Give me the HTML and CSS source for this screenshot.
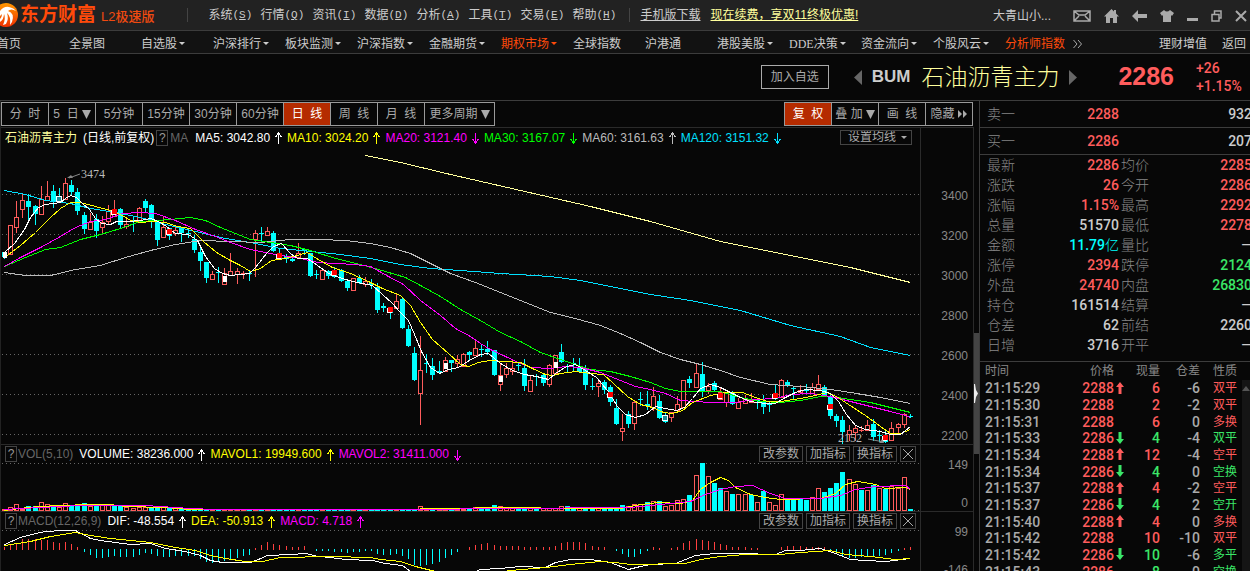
FILE: index.html
```html
<!DOCTYPE html>
<html lang="zh-CN">
<head>
<meta charset="utf-8">
<title>东方财富 L2极速版</title>
<link rel="stylesheet" href="styles.css">
</head>
<body>
<svg class="defs" aria-hidden="true">
  <symbol id="up" viewBox="0 0 7 13"><path d="M3 1H4V13H3ZM2 2H5V4H2ZM1 4H2V6H1ZM5 4H6V6H5ZM0 5H1V6H0ZM6 5H7V6H6Z" fill="currentColor"/></symbol>
  <symbol id="down" viewBox="0 0 7 13"><path d="M3 2H4V13H3ZM2 10H5V12H2ZM1 8H2V10H1ZM5 8H6V10H5ZM0 8H1V9H0ZM6 8H7V9H6Z" fill="currentColor"/></symbol>
  <symbol id="fatup" viewBox="0 0 8 13"><path d="M4 0L8 5H5.500V12H2.500V5H0Z" fill="currentColor"/></symbol>
  <symbol id="fatdown" viewBox="0 0 8 13"><path d="M4 12L8 7H5.500V0H2.500V7H0Z" fill="currentColor"/></symbol>
</svg>
<header class="titlebar">
  <svg class="logo" width="19" height="26" viewBox="0 0 19 26"><defs><linearGradient id="lg" x2="0" y2="1"><stop stop-color="#ff9800"/><stop offset="1" stop-color="#f03000"/></linearGradient></defs><circle cx="6" cy="13" r="12" fill="url(#lg)"/><path d="M0 9Q4 4 9 5Q14 6 16 9Q11 6 8 9Q15 11 12 20L10 23Q11 14 7 11Q9 17 6 22L3 23Q6 16 4 12Q4 17 0 20V17Q2 15 2 12L0 14Z" fill="#fff"/></svg>
  <span class="brand">东方财富</span><span class="edition">L2极速版</span>
  <nav class="menu">
    <button>系统<span class="key">(<u>S</u>)</span></button><button>行情<span class="key">(<u>Q</u>)</span></button><button>资讯<span class="key">(<u>I</u>)</span></button><button>数据<span class="key">(<u>D</u>)</span></button><button>分析<span class="key">(<u>A</u>)</span></button><button>工具<span class="key">(<u>T</u>)</span></button><button>交易<span class="key">(<u>E</u>)</span></button><button>帮助<span class="key">(<u>H</u>)</span></button>
  </nav>
  <a class="dl" href="#">手机版下载</a><a class="promo" href="#">现在续费，享双11终极优惠!</a>
  <div class="tools">
    <span class="user">大青山小...</span>
    <button aria-label="邮件"><svg width="18" height="12"><path d="M1 1H17V11H1ZM1 1L6 5H12L17 1M1 11L6 6M17 11L12 6" fill="none" stroke="#aaa" stroke-width="1.500"/></svg></button>
    <button aria-label="主页"><svg width="15" height="14"><path d="M7.500 0L10 2.500V1H12V4.500L15 7.500H13V14H9V9H6V14H2V7.500H0Z" fill="#aaa"/></svg></button>
    <button aria-label="后退"><svg width="15" height="12"><path d="M0 6L6 0V4H15V8H6V12Z" fill="#aaa"/></svg></button>
    <button aria-label="皮肤"><svg width="14" height="12"><path d="M4 0Q7 3 10 0L14 3L12 6L11 5V12H3V5L2 6L0 3Z" fill="#aaa"/></svg></button>
    <button aria-label="最小化"><svg width="11" height="12"><path d="M0 8H11V11H0Z" fill="#aaa"/></svg></button>
    <button aria-label="还原"><svg width="11" height="12"><path d="M1 4.500H8V11H1ZM3.500 4V1H10V8H8" fill="none" stroke="#aaa" stroke-width="1.500"/></svg></button>
    <button aria-label="关闭"><svg width="12" height="12"><path d="M1 1L11 11M11 1L1 11" stroke="#aaa" stroke-width="2"/></svg></button>
  </div>
</header>
<nav class="nav">
  <a href="#">首页</a><a href="#">全景图</a><a class="dd" href="#">自选股</a><a class="dd" href="#">沪深排行</a><a class="dd" href="#">板块监测</a><a class="dd" href="#">沪深指数</a><a class="dd" href="#">金融期货</a><a class="dd hot" href="#">期权市场</a><a href="#">全球指数</a><a href="#">沪港通</a><a class="dd" href="#">港股美股</a><a class="dd" href="#"><span><span class="latin">DDE</span>决策</span></a><a class="dd" href="#">资金流向</a><a class="dd" href="#">个股风云</a><a class="hot" href="#">分析师指数</a>
  <svg class="more" width="9" height="8"><path d="M.5 0L4 4L.5 8M5 0L8.500 4L5 8" fill="none" stroke="#aaa"/></svg>
  <span class="side-links"><a href="#">理财增值</a><a href="#">返回</a></span>
</nav>
<section class="quote-head">
  <button class="add">加入自选</button>
  <button class="step" aria-label="上一个"><svg width="8" height="15"><path d="M8 0V15L0 7.500Z" fill="#666"/></svg></button>
  <strong class="code">BUM</strong><h1>石油沥青主力</h1>
  <button class="step" aria-label="下一个"><svg width="8" height="15"><path d="M0 0V15L8 7.500Z" fill="#666"/></svg></button>
  <strong class="price">2286</strong>
  <div class="change"><span>+26</span><span>+1.15%</span></div>
</section>
<main class="body">
  <section class="charts">
    <div class="toolbar">
      <div class="group"><button>分&nbsp; 时</button><button>5&nbsp; 日<svg class="tri" width="9" height="9"><path d="M0 0H9L4.500 9Z"/></svg></button><button>5分钟</button><button>15分钟</button><button>30分钟</button><button>60分钟</button><button class="on">日&nbsp; 线</button><button>周&nbsp; 线</button><button>月&nbsp; 线</button><button class="wide">更多周期<svg class="tri" width="9" height="9"><path d="M0 0H9L4.500 9Z"/></svg></button></div>
      <div class="group right"><button class="on">复&nbsp; 权</button><button>叠 加<svg class="tri" width="9" height="9"><path d="M0 0H9L4.500 9Z"/></svg></button><button>画&nbsp; 线</button><button>隐藏<svg class="tri" width="10" height="8"><path d="M0 0L4 4L0 8ZM5 0L9 4L5 8Z"/></svg></button></div>
    </div>
    <div class="panel">
      <div class="plot">
        <div class="legend">
          <span class="pale">石油沥青主力</span><span class="white period">(日线,前复权)</span><button class="help">?</button><span class="dim ind">MA</span>
          <span class="white">MA5: 3042.80<svg class="ar"><use href="#up"/></svg></span><span class="yellow">MA10: 3024.20<svg class="ar"><use href="#up"/></svg></span><span class="magenta">MA20: 3121.40<svg class="ar"><use href="#down"/></svg></span><span class="green">MA30: 3167.07<svg class="ar"><use href="#down"/></svg></span><span class="gray">MA60: 3161.63<svg class="ar"><use href="#up"/></svg></span><span class="cyan">MA120: 3151.32<svg class="ar"><use href="#down"/></svg></span>
          <label class="ma-set"><select aria-label="设置均线"><option>设置均线</option></select></label>
        </div>
        <svg class="chart" id="kline" height="297" viewBox="1 147 919 297" preserveAspectRatio="none"></svg>
      </div>
      <div class="axis main-axis"><span>3400</span><span>3200</span><span>3000</span><span>2800</span><span>2600</span><span>2400</span><span>2200</span></div>
    </div>
    <div class="panel">
      <div class="plot">
        <div class="legend">
          <button class="help">?</button><span class="dim ind sub">VOL(5,10)</span><span class="white">VOLUME: 38236.000<svg class="ar"><use href="#up"/></svg></span><span class="yellow">MAVOL1: 19949.600<svg class="ar"><use href="#up"/></svg></span><span class="magenta">MAVOL2: 31411.000<svg class="ar"><use href="#down"/></svg></span>
          <span class="acts"><button>改参数</button><button>加指标</button><button>换指标</button><button class="x" aria-label="关闭"><svg width="10" height="10"><path d="M0 0L10 10M10 0L0 10" stroke="#aaa"/></svg></button></span>
        </div>
        <svg class="chart" id="vol" height="48" viewBox="1 463 919 48" preserveAspectRatio="none"></svg>
      </div>
      <div class="axis sub-axis"><span>149</span><span>0</span></div>
    </div>
    <div class="panel">
      <div class="plot">
        <div class="legend">
          <button class="help">?</button><span class="dim ind sub">MACD(12,26,9)</span><span class="white">DIF: -48.554<svg class="ar"><use href="#up"/></svg></span><span class="yellow">DEA: -50.913<svg class="ar"><use href="#up"/></svg></span><span class="magenta">MACD: 4.718<svg class="ar"><use href="#up"/></svg></span>
          <span class="acts"><button>改参数</button><button>加指标</button><button>换指标</button><button class="x" aria-label="关闭"><svg width="10" height="10"><path d="M0 0L10 10M10 0L0 10" stroke="#aaa"/></svg></button></span>
        </div>
        <svg class="chart" id="macd" height="48" viewBox="1 530 919 48" preserveAspectRatio="none"></svg>
      </div>
      <div class="axis sub-axis"><span>99</span><span>-146</span></div>
    </div>
  </section>
  <div class="splitter"><button aria-label="收起"><svg width="4" height="19"><path d="M0 0H1L2 6L4 9.500L2 13L1 19H0Z" fill="#eee"/></svg></button></div>
  <aside class="side">
    <div class="book"><span>卖一</span><b class="r">2288</b><b>932</b></div>
    <div class="book"><span>买一</span><b class="r">2286</b><b>207</b></div>
    <div class="stats">
      <span>最新</span><b class="r">2286</b><span>均价</span><b class="r">2285</b>
      <span>涨跌</span><b class="r">26</b><span>今开</span><b class="r">2286</b>
      <span>涨幅</span><b class="r">1.15%</b><span>最高</span><b class="r">2292</b>
      <span>总量</span><b>51570</b><span>最低</span><b class="r">2278</b>
      <span>金额</span><b class="c">11.79<i>亿</i></b><span>量比</span><b>—</b>
      <span>涨停</span><b class="r">2394</b><span>跌停</span><b class="g">2124</b>
      <span>外盘</span><b class="r">24740</b><span>内盘</span><b class="g">26830</b>
      <span>持仓</span><b>161514</b><span>结算</span><b>—</b>
      <span>仓差</span><b>62</b><span>前结</span><b>2260</b>
      <span>日增</span><b>3716</b><span>开平</span><b>—</b>
    </div>
    <div class="ticks">
    <table>
      <colgroup><col class="w-time"><col class="w-price"><col class="w-dir"><col class="w-vol"><col class="w-diff"><col class="w-kind"></colgroup>
      <thead><tr><th class="l">时间</th><th>价格</th><th></th><th>现量</th><th>仓差</th><th>性质</th></tr></thead>
      <tbody>
      <tr><td>21:15:29</td><td class="r">2288</td><td class="r"><svg><use href="#fatup"/></svg></td><td class="r">6</td><td>-6</td><td class="r">双平</td></tr>
      <tr><td>21:15:30</td><td class="r">2288</td><td></td><td class="r">2</td><td>-2</td><td class="r">双平</td></tr>
      <tr><td>21:15:31</td><td class="r">2288</td><td></td><td class="r">6</td><td>0</td><td class="r">多换</td></tr>
      <tr><td>21:15:33</td><td class="r">2286</td><td class="g"><svg><use href="#fatdown"/></svg></td><td class="g">4</td><td>-4</td><td class="g">双平</td></tr>
      <tr><td>21:15:34</td><td class="r">2288</td><td class="r"><svg><use href="#fatup"/></svg></td><td class="r">12</td><td>-4</td><td class="r">空平</td></tr>
      <tr><td>21:15:34</td><td class="r">2286</td><td class="g"><svg><use href="#fatdown"/></svg></td><td class="g">4</td><td>0</td><td class="g">空换</td></tr>
      <tr><td>21:15:37</td><td class="r">2288</td><td class="r"><svg><use href="#fatup"/></svg></td><td class="r">4</td><td>-2</td><td class="r">空平</td></tr>
      <tr><td>21:15:37</td><td class="r">2286</td><td class="g"><svg><use href="#fatdown"/></svg></td><td class="g">4</td><td>2</td><td class="g">空开</td></tr>
      <tr><td>21:15:40</td><td class="r">2288</td><td class="r"><svg><use href="#fatup"/></svg></td><td class="r">4</td><td>0</td><td class="r">多换</td></tr>
      <tr><td>21:15:42</td><td class="r">2288</td><td></td><td class="r">10</td><td>-10</td><td class="r">双平</td></tr>
      <tr><td>21:15:42</td><td class="r">2286</td><td class="g"><svg><use href="#fatdown"/></svg></td><td class="g">10</td><td>-6</td><td class="g">多平</td></tr>
      <tr><td>21:15:43</td><td class="r">2286</td><td></td><td class="g">8</td><td>0</td><td class="g">空换</td></tr>
      </tbody>
    </table>
    <div class="bar"><svg width="8" height="5"><path d="M0 5L4 0L8 5Z" fill="#555"/></svg></div>
    </div>
  </aside>
</main>
<script src="chart.js"></script>
</body>
</html>
```
FILE: styles.css
```css
* { box-sizing: border-box; }
html, body { height: 100%; }
body { margin: 0; background: #070707; color: #bbb; font: 12px/16px "Liberation Sans", "Noto Sans CJK SC", sans-serif; overflow: hidden; display: flex; flex-direction: column; white-space: nowrap; }
button, select { font: inherit; color: inherit; background: none; border: 0; padding: 0; margin: 0; }
a { color: inherit; text-decoration: none; }
svg { flex: none; }
.defs { width: 0; height: 0; position: absolute; }

.titlebar { flex: none; height: 31px; background: #222; border-bottom: 1px solid #3c3c3c; display: flex; align-items: center; color: #ccc; }
.brand { font-size: 19px; font-weight: 700; color: #ff4a0a; margin-left: 1px; }
.edition { font-size: 13px; font-weight: 500; color: #f04a10; margin-left: 5px; padding-top: 4px; }
.menu { display: flex; margin-left: 33px; padding-left: 20px; border-left: 1px solid #444; height: 14px; align-items: center; }
.menu button { width: 52px; text-align: left; display: flex; align-items: center; }
.key { font: 11px/14px "Liberation Mono", monospace; }
.latin { font: 12px/14px "Liberation Serif", serif; }
.dl { border-left: 1px solid #444; padding-left: 10px; margin-left: 5px; text-decoration: underline; line-height: 14px; }
.promo { color: #ffff9c; text-decoration: underline; margin-left: 10px; }
.tools { margin-left: auto; display: flex; align-items: center; gap: 13px; padding: 2px 3px 0 0; }
.tools button { display: flex; }
.user { margin-right: 3px; width: 64px; }

.nav { flex: none; height: 23px; border-bottom: 1px solid #3c3c3c; background: #121212; display: flex; align-items: center; color: #ccc; padding-top: 3px; }
.nav > a { width: 72px; display: flex; align-items: center; gap: 2px; }
.nav > a:first-child { margin-left: -3px; }
.dd::after { content: ""; border: 3px solid transparent; border-top-color: currentColor; border-bottom: 0; }
.nav .hot { color: #ff4a0a; }
.nav .more { margin-left: -4px; }
.side-links { margin-left: auto; display: flex; gap: 15px; padding-right: 4px; }

.quote-head { flex: none; height: 47px; border-bottom: 1px solid #3c3c3c; display: flex; align-items: center; justify-content: flex-end; padding-right: 6px; }
.add { border: 1px solid #aaa; height: 24px; width: 68px; color: #aaa; margin-right: 25px; }
.step { display: flex; }
.code { font-size: 17px; color: #ccc; margin: 0 11px 0 10px; }
h1 { font-size: 23px; line-height: 26px; font-weight: 300; color: #ffff9c; margin: 0 10px 0 0; }
.price { font-size: 25px; color: #ff5c5c; margin: 0 22px 2px 41px; }
.change { display: flex; flex-direction: column; width: 48px; font: 500 14px/18px Roboto, sans-serif; color: #ff5c5c; }

.body { flex: 1; min-height: 0; display: grid; grid-template-columns: minmax(0, 1fr) 5px 271px; }
.charts { border-left: 1px solid #222; min-width: 0; overflow: hidden; }
.toolbar { display: flex; justify-content: space-between; height: 27px; padding: 1px 0; border-bottom: 1px solid #2a2a2a; }
.group { display: flex; }
.group button { width: 48px; height: 24px; border: 1px solid #999; margin-right: -1px; color: #aaa; display: flex; align-items: center; justify-content: center; }
.group .wide { width: 71px; }
.group.right { padding-right: 2px; }
.group .on { background: #b52b00; color: #fff; }
.tri { fill: #aaa; margin-left: 3px; }

.panel { display: grid; grid-template-columns: minmax(0, 1fr) 52px; border-bottom: 1px solid #2a2a2a; border-right: 1px solid #2a2a2a; }
.plot { border-right: 1px solid #2a2a2a; }
.chart { display: block; width: 100%; }
.legend { height: 18px; display: flex; align-items: center; padding-left: 4px; }
.toolbar + .panel .legend { height: 19px; }
.legend > span { display: flex; align-items: center; }
.ar { width: 7px; height: 13px; margin: 0 5px; }
.help { width: 12px; height: 16px; line-height: 14px; border: 1px solid #444; color: #999; }
.period { margin: 0 2px 0 6px; }
.ind { margin: 0 7px 0 2px; }
.ind.sub { margin: 0 6px 0 1px; }
.white { color: #fff; } .yellow { color: #ff0; } .magenta { color: #f0f; } .green { color: #0f0; } .gray { color: #bbb; } .cyan { color: #00e0ff; } .pale { color: #ffff9c; } .dim { color: #666; }
.ma-set { margin-left: auto; margin-right: 8px; display: flex; align-items: center; border: 1px solid #444; width: 72px; height: 15px; padding: 0 4px 0 7px; color: #aaa; justify-content: space-between; }
.ma-set select { appearance: none; height: 13px; line-height: 13px; }
.ma-set::after { content: ""; border: 3px solid transparent; border-top-color: #aaa; border-bottom: 0; }
.legend .acts { margin-left: auto; gap: 3px; padding-right: 4px; color: #aaa; }
.acts button { border: 1px solid #444; width: 44px; height: 16px; line-height: 14px; }
.acts .x { width: 16px; display: flex; align-items: center; justify-content: center; }
.axis { display: flex; flex-direction: column; text-align: right; padding-right: 5px; color: #888; }
.main-axis { gap: 24px; padding-top: 60px; }
.sub-axis { justify-content: space-between; padding-top: 12px; }

.splitter { padding-top: 232px; }
.splitter button { display: flex; align-items: center; width: 5px; height: 121px; background: #444; }

.side { border-left: 1px solid #3c3c3c; min-width: 0; overflow: hidden; color: #888; font-size: 14px; }
.side b { font: 500 14px/20px Roboto, "Noto Sans CJK SC", sans-serif; text-align: right; color: #ccc; }
.side i { font-style: normal; font-weight: 300; }
.book, .stats { display: grid; grid-template-columns: 29px 103px 30px minmax(0, 1fr); padding-left: 7px; margin-right: -2px; font-weight: 300; line-height: 20px; }
.book { grid-template-columns: 29px 103px 1fr; height: 27px; align-items: center; border-bottom: 1px solid #3c3c3c; }
.stats { padding-bottom: 6px; border-bottom: 1px solid #3c3c3c; }
.stats span:nth-child(4n + 3) { padding-left: 2px; }
.side .r { color: #ff5c5c; } .side .g { color: #3be668; } .side .c { color: #0ff; }
.ticks { display: flex; }
table { table-layout: fixed; width: 259px; border-collapse: collapse; margin-left: 5px; font: 14px/16px Roboto, "Noto Sans CJK SC", sans-serif; color: #aaa; }
.w-time { width: 60px; } .w-price { width: 69px; } .w-dir { width: 14px; } .w-vol { width: 32px; } .w-diff { width: 40px; }
th, td { padding: 0; text-align: right; }
th { height: 18px; font-size: 12px; font-weight: 400; color: #888; }
.l, td:first-child { text-align: left; }
th:last-child, td:last-child { padding-right: 5px; }
tbody tr { height: 17px; }
tbody tr:nth-child(3n + 1) { height: 16px; }
td { font-weight: 500; height: 16px; line-height: 16px; }
td:last-child { font-size: 12px; font-weight: 400; }
td svg { width: 8px; height: 13px; display: block; margin-left: 2px; }
.bar { flex: 1; margin-top: 18px; background: #151515; padding-top: 6px; }
.bar svg { display: block; }
```
FILE: chart.js
```js
const STEP = 6.12;
const xAt = i => Math.round(4 + i * STEP);
const RED = '#ff5c5c', CYAN = '#00ffff';

// colour, high, top, bottom, low
const candles = `C252,252,257,258 R225,225,254,254 R201,217,227,232 R194,200,209,217 C194,201,207,221 C205,206,214,224 R186,199,214,214 R181,196,200,200 C185,191,201,207 C188,197,202,202
R178,183,199,199 C180,185,192,195 C188,192,211,214 C212,215,229,233 R213,222,229,229 C214,219,231,237 R216,222,227,232 R205,211,221,224 R200,210,216,216 C208,209,225,228
R218,224,226,228 C216,220,221,231 R207,208,221,221 C199,201,208,211 C204,205,222,227 C222,222,240,245 R216,227,237,237 C228,228,236,239 R226,230,233,235 C228,228,233,241
C230,233,234,237 C235,239,250,252 C247,252,261,270 C262,262,278,282 R271,274,279,279 C267,272,273,282 R268,273,284,284 R253,271,275,275 R268,271,274,283 R271,273,274,278
C270,273,274,280 R230,233,239,276 C227,233,234,240 R227,231,235,235 C231,233,251,251 C248,254,259,259 C254,256,259,262 C255,259,261,261 R243,253,257,257 C248,249,251,254
C253,253,276,276 C270,274,275,278 R268,270,279,279 C270,271,276,278 C267,271,277,277 C269,270,281,281 C279,281,288,290 R278,278,290,290 C275,278,283,283 R277,281,284,286
C279,283,285,288 C283,287,310,312 C303,306,308,311 C307,307,313,318 R294,301,308,308 C298,299,328,328 C325,329,346,346 C347,353,380,380 R336,370,393,424 C354,363,364,372
C358,366,375,379 C361,371,372,373 R357,360,371,371 C360,360,363,371 R355,359,363,366 R353,354,366,366 C351,352,355,359 R340,348,355,355 C344,349,350,356 C341,349,352,354
C350,350,375,375 R364,375,384,390 R363,368,374,377 R360,368,371,374 C362,365,366,370 C359,368,386,390 R376,380,391,391 C374,376,377,385 C374,375,383,385 R364,365,384,386
R355,355,373,373 C344,352,362,362 C364,366,367,372 C358,363,364,371 C358,367,372,372 C365,368,385,389 C378,386,387,389 R381,383,386,396 C380,382,390,393 C385,387,402,405
C399,408,424,424 R414,428,431,440 C411,414,424,427 R400,402,423,429 C392,399,400,405 C391,404,406,409 R387,396,407,410 C395,401,418,418 C412,415,422,422 R412,412,417,421
R396,404,410,410 R380,380,407,407 C376,379,383,387 R363,373,387,387 C362,374,391,396 R383,386,390,393 C381,383,390,390 R387,392,399,399 R392,392,402,406 C391,392,404,404
R398,402,408,408 R395,398,403,403 R393,400,402,402 C398,400,401,408 C395,402,407,413 C402,404,405,411 C384,393,399,399 R379,380,397,397 C380,382,386,386 C386,388,389,399
R385,390,392,392 C384,390,391,392 R383,387,393,393 R375,384,389,389 C385,387,396,396 C395,396,416,418 C414,416,421,426 C416,420,432,443 R425,430,434,440 R426,428,432,440
R426,430,431,431 R420,425,430,430 C419,424,437,440 C430,435,436,441 C430,436,442,442 R422,428,440,440 R423,424,427,433 R413,414,424,427 C414,416,417,417`
  .split(/\s+/).map(s => [s[0], ...s.slice(1).split(',').map(Number)]);

// candle index, centre y, kind of signal
const signals = [[0, 255, 'W'], [9, 199, 'T'], [18, 212, 'R'], [27, 232, 'R'], [36, 279, 'W'], [45, 256, 'R'], [54, 273, 'R'], [63, 310, 'R'], [72, 366, 'W'], [81, 379, 'W'], [90, 365, 'W'], [99, 395, 'R'], [108, 418, 'T'], [117, 396, 'R'], [126, 396, 'R'], [135, 407, 'R'], [144, 438, 'R']];

const averages = [
  ['#ffff9c', '365,155 400,162 450,174 520,190 590,206 650,221 720,241 780,253 850,267 910,282'],
  ['#00e0ff', '4,190 25,194 45,200 70,203 90,208 115,212 140,217 165,224 195,231 225,238 250,242 280,248 310,251 340,254 370,258 400,264 430,268 460,270 500,273 550,276 580,280 610,286 650,294 690,300 740,310 790,325 840,336 870,347 910,355'],
  ['#bbb', '4,272 25,275 50,275 75,269 100,265 125,257 150,250 175,244 200,240 230,241 260,242 290,239 320,239 345,240 370,243 390,247 410,253 430,263 450,273 475,282 500,292 525,302 550,312 575,318 600,325 620,333 640,342 660,352 680,359 700,364 720,370 740,377 770,384 800,386 830,389 850,392 880,397 910,403'],
  ['#0f0', '4,266 25,257 45,249 60,247 80,239 100,234 120,228 140,221 155,220 170,219 190,217 205,220 220,227 235,233 250,239 270,242 290,245 310,250 335,258 360,264 385,271 405,277 420,285 440,296 460,309 480,320 500,332 520,341 540,352 560,359 575,364 590,369 610,371 630,376 650,382 665,388 680,391 720,391 740,397 760,401 780,402 800,400 820,396 830,396 850,399 870,402 890,407 910,412'],
  ['#f0f', '4,266 20,257 40,247 60,236 75,227 90,221 105,219 122,213 140,212 155,213 175,220 195,229 215,236 230,242 250,249 275,254 300,258 318,262 335,263 355,264 370,266 388,276 403,284 420,300 440,315 455,328 470,336 480,343 490,349 505,356 520,363 530,367 550,368 565,366 580,367 600,372 620,380 635,386 650,389 665,393 680,400 695,401 710,402 735,402 755,399 775,398 790,394 810,393 830,396 850,401 870,406 890,411 905,415 910,417'],
  ['#ff0', '4,257 20,245 35,232 50,217 60,208 70,202 80,202 95,206 110,210 122,215 130,220 140,222 152,221 165,222 177,226 190,228 203,241 216,252 230,260 240,265 250,271 260,268 271,260 285,258 300,254 307,252 316,258 332,267 350,273 368,281 382,288 400,295 410,305 420,322 432,339 448,353 460,364 468,366 478,362 490,360 520,362 532,368 545,374 552,375 560,373 575,371 590,373 603,374 613,383 627,396 640,404 652,407 663,412 672,413 682,410 692,402 710,395 725,392 742,392 755,397 767,401 780,401 800,398 815,395 826,392 836,396 848,404 865,415 880,426 890,433 900,433 910,429'],
  ['#fff', '4,252 14,243 24,229 30,217 38,207 45,204 53,203 60,202 65,198 70,195 76,197 82,203 89,209 95,218 101,223 110,224 116,221 128,221 140,220 150,218 158,221 166,226 175,233 188,234 197,240 205,256 214,268 222,273 230,275 249,273 255,267 266,253 273,246 281,243 290,253 297,258 307,258 317,265 330,274 342,278 352,281 362,283 372,285 382,294 392,303 400,312 408,320 414,334 421,351 430,367 439,373 448,369 458,367 467,361 480,354 488,353 500,363 512,370 524,374 536,376 548,379 555,373 566,366 575,364 585,370 596,377 607,390 617,406 625,414 635,417 645,414 655,406 665,408 676,410 684,407 692,398 700,388 710,384 720,387 728,391 740,397 750,401 765,403 775,403 783,398 795,392 805,389 820,390 830,393 838,401 846,414 855,425 865,429 880,431 890,434 900,434 910,426']
];

const rect = (x, y, w, h, c) => `<rect x="${x}" y="${y}" width="${w}" height="${h}" fill="${c}"/>`;
const box = (x, y, w, h, c, bg = '#070707') => `<rect x="${x + 0.5}" y="${y + 0.5}" width="${w - 1}" height="${Math.max(h - 1, 1)}" fill="${bg}" stroke="${c}"/>`;
const line = (c, pts) => `<polyline points="${pts}" fill="none" stroke="${c}" shape-rendering="crispEdges" transform="translate(.5 .5)"/>`;
const dots = y => `<path d="M2 ${y + 0.5}H920" stroke="#666" stroke-dasharray="1 3"/>`;

let k = [194, 234, 274, 314, 354, 394, 434].map(dots).join('');
candles.forEach(([c, hi, top, bot, lo], i) => {
  const x = xAt(i), col = c === 'R' ? RED : CYAN;
  k += rect(x, hi, 1, lo - hi + 1, col);
  k += c === 'R' && bot - top > 1 ? box(x - 2, top, 5, bot - top + 1, col) : rect(x - 2, top, 5, Math.max(bot - top, 1), col);
});
averages.forEach(a => { k += line(...a); });
signals.forEach(([i, y, kind]) => {
  const x = xAt(i);
  if (kind === 'W') k += rect(x - 1, y - 3, 4, 6, '#fff');
  if (kind === 'T') k += box(x - 3, y - 3, 6, 6, '#fff', '#1a8a96');
  if (kind === 'R') k += rect(x - 3, y - 2, 5, 5, '#fff') + rect(x - 2, y - 3, 5, 5, '#f00');
});
k += '<path d="M80 174L69 178" stroke="#888"/><path d="M67 178L71 175L73 178Z" fill="#888"/><path d="M868 439L884 442" stroke="#888"/><path d="M884 443L879 443L882 439Z" fill="#888"/>';
k += '<g fill="#bbb" font-family="Liberation Serif, serif" font-size="12"><text x="81" y="178">3474</text><text x="838" y="442">2152</text></g>';
document.getElementById('kline').innerHTML = k;

const volumes = `R509 R507 R504 R509 C506 C506 R502 R504 C505 R507 R503 C505 C505 C503 R506 C504 R505 R505 C505 C505 R507 R508 R507 R507 C507 C507 R507 C507 R508 C508 C508 C509 C509 C509 R510 C510 R510 R510 R510 R510
C510 R510 C510 R510 C510 C510 C510 C510 R510 C510 C510 C510 R510 C510 C510 C510 C510 R510 C510 R510 C510 C510 C510 C510 R510 C510 C510 C509 R506 R508 C508 R508 R508 C508 R509 R509 C509 R507 C508 C507
C505 R506 R508 R508 C508 C508 R508 C508 R508 R508 R508 R506 C506 C507 R508 C508 C508 R508 C508 C508 C507 C505 R506 R504 R504 C502 R501 C501 R506 R505 R500 R499 C495 R475 C463 R476 C483 C488 R491 C494
R494 R494 C495 R502 C491 R502 R505 R494 C498 C498 C499 C500 R497 R488 C492 C488 C483 C472 R479 R484 C490 R490 C485 R488 C489 R486 R488 R477 C509`.split(/\s+/);
let v = dots(463) + dots(510);
volumes.forEach((s, i) => {
  const y = +s.slice(1), x = xAt(i) - 2;
  v += s[0] === 'R' ? box(x, y, 5, 511 - y, RED) : rect(x, y, 5, 511 - y, CYAN);
});
v += line('#ff0', '4,510 28,507 40,506 60,505 90,504 110,504 125,506 165,507 190,509 250,509 410,509 430,508 455,508 495,507 520,507 560,508 620,508 640,504 658,502 680,503 692,500 700,489 710,482 720,477 728,480 735,487 750,494 765,497 780,499 820,498 835,493 845,484 857,481 875,484 885,488 905,487 910,489');
v += line('#f0f', '4,509 40,507 80,505 145,505 190,508 215,509 420,509 500,508 630,507 660,504 690,501 705,494 720,489 735,486 752,485 770,493 785,498 820,498 840,495 855,489 875,486 905,485 910,489');
document.getElementById('vol').innerHTML = v;

// histogram heights around the zero line, positive is up
const ZERO = 549;
const hist = [2, 4, 6, 10, 10, 10, 9, 9, 7, 6, 7, 5, 2, -3, -6, -9, -9, -8, -7, -8, -8, -8, -6, -4, -5, -7, -8, -8, -7, -7, -7, -7, -10, -13, -14, -13, -12, -10, -9, -7, -6,
  1, 4, 7, 5, 4, 3, 2, 2, 3, 0, -2, -2, -2, -3, -3, -4, -3, -3, -2, -2, -5, -6, -6, -5, -7, -10, -16, -17, -16, -15, -13, -9, -6, -3, 0, 2, 4, 5, 6, 4, 3, 3, 3, 3, 2, 2, 2, 2, 2, 3, 6, 7, 7, 7, 6, 3, 2, 2, 0,
  -2, -5, -8, -8, -5, -2, 2, 1, 0, 1, 2, 6, 8, 10, 9, 8, 7, 5, 4, 2, 2, 2, 1, 1, 0, 0, 0, 2, 3, 3, 3, 2, 2, 2, 2, -2, -5, -7, -9, -9, -8, -7, -7, -7, -6, -4, -2, 1, 2];
let m = dots(530);
hist.forEach((h, i) => { m += h > 0 ? rect(xAt(i), ZERO - h, 1, h + 1, '#ff4040') : rect(xAt(i), ZERO, 1, -h, CYAN); });
m += line('#fff', '4,544 20,537 35,533 45,531 62,530 75,530 90,538 100,540 115,542 130,544 150,543 165,548 185,551 200,555 210,560 222,562 250,562 258,559 267,555 290,554 305,553 318,556 330,557 345,559 372,560 385,563 402,565 415,575 440,585 465,575 480,569 500,568 520,566 545,567 555,562 570,559 590,559 610,562 628,569 640,566 650,564 675,563 685,559 695,555 715,553 740,553 775,554 785,550 800,550 820,548 835,553 850,559 865,560 885,561 910,558');
m += line('#ff0', '4,545 30,541 50,536 75,532 90,535 110,538 150,542 175,547 195,550 210,555 225,558 245,561 262,561 280,557 330,556 370,557 380,559 400,561 415,566 435,571 460,576 490,573 510,570 545,567 570,564 600,561 615,562 630,564 685,563 700,559 720,556 745,554 780,554 800,552 830,550 845,554 870,556 895,559 910,558');
document.getElementById('macd').innerHTML = m;
```
